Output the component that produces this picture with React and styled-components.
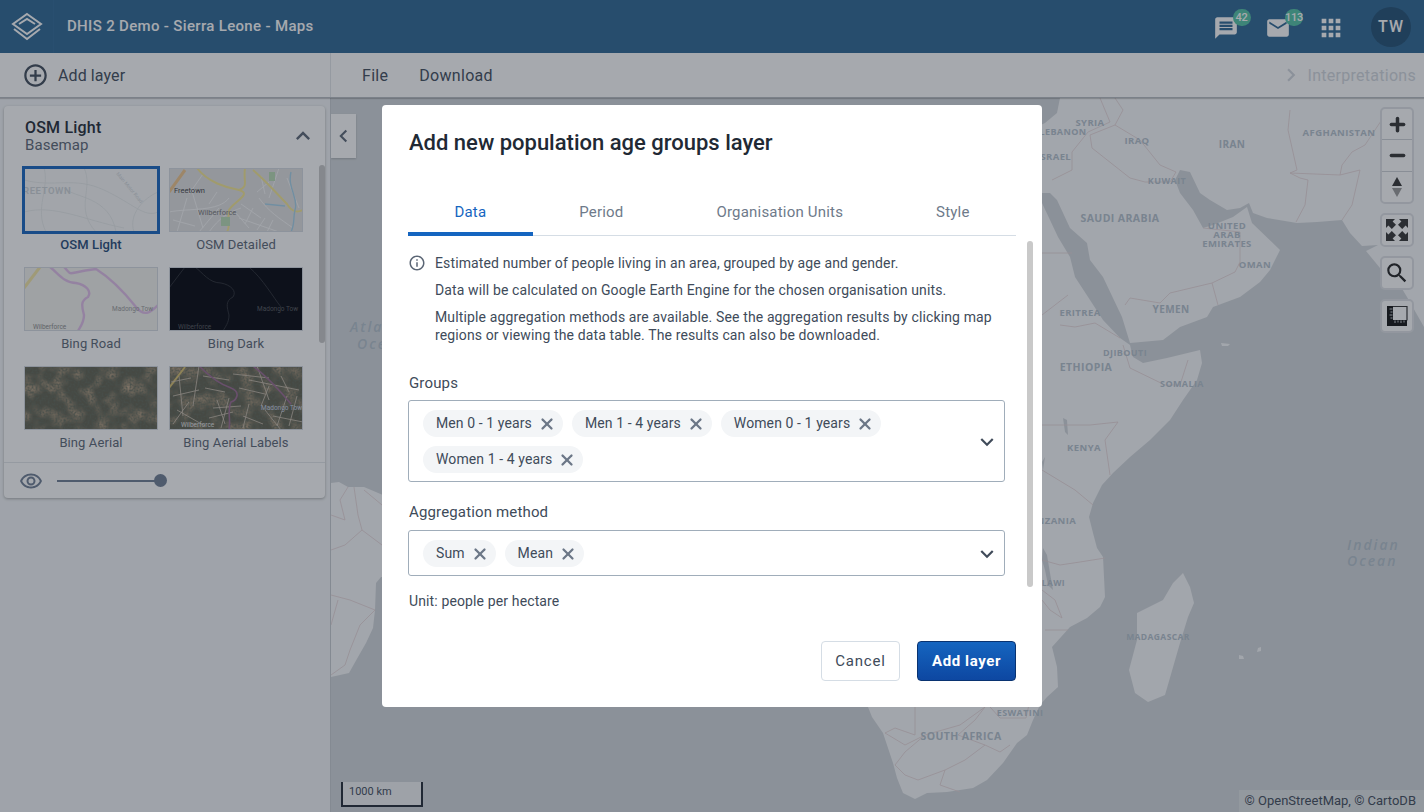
import React from 'react'
import styled, { createGlobalStyle } from 'styled-components'
import {
    MdMessage, MdEmail, MdApps, MdAddCircleOutline, MdChevronRight, MdChevronLeft,
    MdExpandLess, MdKeyboardArrowDown, MdInfoOutline, MdOutlineRemoveRedEye, MdSearch,
} from 'react-icons/md'
import { X, Plus, Minus } from 'lucide-react'

const GlobalStyle = createGlobalStyle`
    html, body {
        margin: 0;
        height: 100%;
        overflow: hidden;
        font-family: Roboto, "Liberation Sans", sans-serif;
        color: #404b5a;
    }
    * { box-sizing: border-box; }
`

const basemaps = [
    { id: 'light', name: 'OSM Light', selected: true },
    { id: 'detailed', name: 'OSM Detailed' },
    { id: 'road', name: 'Bing Road' },
    { id: 'dark', name: 'Bing Dark' },
    { id: 'aerial', name: 'Bing Aerial' },
    { id: 'labels', name: 'Bing Aerial Labels' },
]

const mapLabels = [
    ['SYRIA', 1090, 126, 9.5],
    ['LEBANON', 1063, 135, 9],
    ['ISRAEL', 1054, 160, 9.5],
    ['IRAQ', 1137, 144, 9.5],
    ['IRAN', 1232, 148, 10],
    ['AFGHANISTAN', 1339, 136, 9.5],
    ['KUWAIT', 1167, 184, 9],
    ['SAUDI ARABIA', 1120, 222, 10.5],
    ['UNITED', 1227, 229, 9.5],
    ['ARAB', 1227, 238, 9.5],
    ['EMIRATES', 1227, 247, 9.5],
    ['OMAN', 1255, 268, 9.5],
    ['YEMEN', 1171, 313, 10],
    ['ERITREA', 1080, 316, 9.5],
    ['DJIBOUTI', 1125, 356, 9],
    ['ETHIOPIA', 1086, 371, 10.5],
    ['SOMALIA', 1182, 387, 9],
    ['KENYA', 1084, 451, 9.5],
    ['TANZANIA', 1050, 524, 9.5],
    ['MALAWI', 1046, 586, 8.5],
    ['MADAGASCAR', 1158, 640, 8.5],
    ['ESWATINI', 1020, 716, 9],
    ['SOUTH AFRICA', 961, 740, 10.5],
]

const mapBorders = [
    '1100,98 1110,122 1088,132 1072,152 1072,170 1052,180',
    '1115,98 1123,110 1115,125 1090,135 1092,148 1130,178 1145,182 1170,182 1176,172',
    '1115,125 1140,140 1160,165 1176,172',
    '1290,110 1288,130 1297,170 1290,173 1300,178 1308,180 1305,205 1296,222',
    '1290,173 1340,175 1342,165 1352,152 1365,145 1385,115',
    '1340,175 1360,170 1352,205 1342,220',
    '1203,228 1240,232 1240,262 1235,272 1212,283',
    '1212,283 1218,305',
    '1212,283 1170,293 1160,303 1130,298 1125,305',
    '1040,253 1072,253',
    '1042,315 1068,295',
    '1060,325 1075,327 1095,323 1120,338',
    '1123,345 1130,368 1165,385 1180,385 1188,360',
    '1040,425 1060,425 1090,425 1118,422 1105,440 1110,475',
    '1042,470 1075,490 1093,505',
    '1105,558 1080,562 1060,565 1042,560',
    '1042,590 1055,600 1062,618 1050,610 1042,600',
    '1045,630 1068,630',
    '915,707 915,735 895,728 885,733 905,745 925,735 960,725 985,707',
    '985,707 975,720 958,735 985,745 1000,752 1010,745',
    '925,735 905,752 895,765 905,775 918,780 945,770 965,760 985,745',
    '945,770 940,785 960,792',
    '1030,700 1026,718 1000,718 990,707',
    '331,515 345,520 340,500 348,487',
    '354,487 358,515 362,530 345,545 331,550',
    '362,530 382,545',
    '364,490 382,505',
    '331,595 350,600 375,610 360,625 350,650 345,665 331,675',
    '338,600 331,625',
]

// Thumbnails are small pictures, each one drawn for its own basemap
function Thumbnail({ id }) {
    if (id === 'light') {
        return (
            <ThumbSvg viewBox="0 0 134 64">
                <rect width="134" height="64" fill="#f8f9f9" />
                <g fill="none" stroke="#e6e8e8" strokeWidth="0.8">
                    <path d="M0 12 C30 20 50 8 80 22 S120 50 134 44" />
                    <path d="M20 0 C26 20 10 40 22 64" />
                    <path d="M60 0 C70 20 50 40 72 64" />
                    <path d="M0 44 C30 36 60 52 100 60" />
                    <path d="M40 20 C50 30 86 28 92 64" />
                    <path d="M110 64 C104 46 120 30 134 24" />
                </g>
                <ThumbText x="-1" y="26" fontSize="9.5" fontWeight="600" fill="#cfd4d8" letterSpacing="0.6">REETOWN</ThumbText>
                <ThumbText x="92" y="6" fontSize="5" fill="#d3d7da" transform="rotate(50 92 6)">Main Motor Road</ThumbText>
            </ThumbSvg>
        )
    }
    if (id === 'detailed') {
        return (
            <ThumbSvg viewBox="0 0 134 64">
                <rect width="134" height="64" fill="#e2e2e2" />
                <g fill="none" stroke="#f8f8f8" strokeWidth="0.9">
                    <path d="M8 64 L18 30 M40 64 C50 50 60 44 72 40 M90 30 C100 44 110 50 124 60 M60 30 C50 44 20 40 0 44" />
                    <path d="M30 64 L50 40 M110 0 L100 30 M70 50 L110 64 M118 10 L130 40" />
                    <path d="M66 44 L80 60 M72 36 L92 50 M84 40 L76 56 M96 50 L88 62 M104 52 L98 64 M22 20 L34 60 M4 52 L26 58 M34 6 L20 26 M48 24 L40 36 M92 8 L96 26 M100 14 L88 24" />
                </g>
                <path d="M0 24 L16 2" stroke="#f1c58a" strokeWidth="3" />
                <path d="M28 0 C38 14 58 20 70 22 C84 26 64 34 60 42 C58 52 62 58 58 64" fill="none" stroke="#f6e892" strokeWidth="2" />
                <path d="M76 0 C74 14 80 18 70 22 M84 2 C100 16 108 26 118 36 C124 46 130 44 134 42" fill="none" stroke="#f6e892" strokeWidth="2" />
                <path d="M96 36 L116 38 M122 4 C118 20 130 30 126 42 C124 50 126 56 122 64" fill="none" stroke="#a7d3ea" strokeWidth="1.4" />
                <rect x="100" y="4" width="6" height="9" fill="#b9dcb4" />
                <rect x="52" y="49" width="9" height="9" fill="#b9dcb4" />
                <ThumbText x="5" y="25" fontSize="7.5" fill="#444">Freetown</ThumbText>
                <ThumbText x="29" y="47" fontSize="7.5" fill="#777">Wilberforce</ThumbText>
            </ThumbSvg>
        )
    }
    if (id === 'road') {
        return (
            <ThumbSvg viewBox="0 0 134 64">
                <rect width="134" height="64" fill="#f3f3ee" />
                <path d="M0 21 L16 0" stroke="#f3e6a4" strokeWidth="3" />
                <path d="M26 0 C34 6 40 16 52 16 C62 18 68 24 64 30 C56 34 58 40 60 48 C60 56 56 60 54 64" fill="none" stroke="#e2bfea" strokeWidth="2.4" />
                <path d="M40 0 C50 10 40 6 72 2 C88 12 104 30 112 40 C120 50 126 46 134 38" fill="none" stroke="#e2bfea" strokeWidth="2.4" />
                <ThumbText x="88" y="44" fontSize="6.5" fill="#9a9a9a">Madongo Tow</ThumbText>
                <ThumbText x="9" y="62" fontSize="6.5" fill="#8a8a8a">Wilberforce</ThumbText>
            </ThumbSvg>
        )
    }
    if (id === 'dark') {
        return (
            <ThumbSvg viewBox="0 0 134 64">
                <rect width="134" height="64" fill="#01030a" />
                <path d="M0 21 L16 0 M26 0 C34 6 40 16 52 16 C62 18 68 24 64 30 C56 34 58 40 60 48 C60 56 56 60 54 64 M80 0 C94 12 104 30 112 40" fill="none" stroke="#2a2d34" strokeWidth="0.9" />
                <ThumbText x="88" y="44" fontSize="6.5" fill="#55585e">Madongo Tow</ThumbText>
                <ThumbText x="9" y="62" fontSize="6.5" fill="#55585e">Wilberforce</ThumbText>
            </ThumbSvg>
        )
    }
    const withLabels = id === 'labels'
    return (
        <ThumbSvg viewBox="0 0 134 64">
            <defs>
                <filter id={`patch-${id}`} x="0" y="0" width="100%" height="100%">
                    <feTurbulence type="fractalNoise" baseFrequency="0.07" numOctaves="2" seed={withLabels ? 5 : 2} />
                    <feColorMatrix values="0 0 0 0 0.58  0 0 0 0 0.42  0 0 0 0 0.27  1.800 0 0 0 -0.750" />
                </filter>
                <filter id={`noise-${id}`} x="0" y="0" width="100%" height="100%">
                    <feTurbulence type="fractalNoise" baseFrequency="0.5" numOctaves="3" seed={withLabels ? 8 : 3} />
                    <feColorMatrix values="0 0 0 0 0.12  0 0 0 0 0.14  0 0 0 0 0.1  2.200 0 0 0 -0.800" />
                </filter>
            </defs>
            <rect width="134" height="64" fill="#5f5f4e" />
            <rect width="134" height="64" filter={`url(#patch-${id})`} />
            <rect width="134" height="64" filter={`url(#noise-${id})`} />
            {withLabels && (
                <g fill="none">
                    <path d="M0 22 L16 1" stroke="#d8c06e" strokeWidth="2" />
                    <g stroke="#cfc3b2" strokeWidth="0.8">
                        <path d="M4 30 L30 24 M10 10 L14 50 M30 0 L24 40 M40 52 L64 46 M48 34 L56 58 M60 32 L52 62 M44 42 L72 40 M80 14 L130 24 M88 0 L100 34 M104 50 L134 56 M96 44 L112 64 M118 30 L108 60" />
                        <path d="M64 8 L100 12 M70 22 L96 28 M8 44 L36 60 M2 16 L22 12 M34 10 L60 14 M36 22 L56 26 M100 20 L92 40 M112 10 L120 26 M128 30 L120 60 M74 50 L94 58 M80 38 L74 62 M4 58 L20 36" />
                    </g>
                    <path d="M30 0 C38 8 50 18 62 22 C72 26 68 34 62 36 C58 44 62 54 60 64 M84 0 C100 12 112 26 122 38" stroke="#9a6a92" strokeWidth="1.6" />
                    <ThumbText x="92" y="44" fontSize="6.5" fill="#c9d6e6" stroke="none">Madongo Tow</ThumbText>
                    <ThumbText x="12" y="61" fontSize="6.5" fill="#e4e4e4" stroke="none">Wilberforce</ThumbText>
                </g>
            )}
        </ThumbSvg>
    )
}

function LogoIcon() {
    return (
        <svg width="32" height="30" viewBox="0 0 32 30" fill="none" stroke="#fff" strokeWidth="2">
            <path d="M16 2 L30 12 L16 22 L2 12 Z" />
            <path d="M8 12 L16 7 L24 12" />
            <path d="M3 17 L16 27 L29 17" />
        </svg>
    )
}

function FullscreenIcon() {
    return (
        <svg width="24" height="24" viewBox="0 0 24 24" fill="#333">
            <path d="M1 1h9L7.6 3.4 11 6.8 6.8 11 3.4 7.6 1 10z" />
            <path d="M23 1v9l-2.4-2.4L17.2 11 13 6.8l3.4-3.4L14 1z" />
            <path d="M1 23v-9l2.4 2.4L6.8 13l4.2 4.2-3.4 3.4L10 23z" />
            <path d="M23 23h-9l2.4-2.4-3.4-3.4 4.2-4.2 3.4 3.4L23 14z" />
        </svg>
    )
}

function MeasureIcon() {
    return (
        <svg width="22" height="22" viewBox="0 0 22 22">
            <path d="M7 1.500h14v14" fill="none" stroke="#333" strokeWidth="1.2" />
            <path d="M1 1h6v14h14v6H1z" fill="#111" />
            <path d="M3.500 4h3M4.500 7h2M3.500 10h3M4.500 13h2M9 18v-2.500M12 17.500v-2M15 18v-2.500M18 17.500v-2" stroke="#c9cdd2" strokeWidth="1" />
        </svg>
    )
}

function CompassIcon() {
    return (
        <svg width="12" height="20" viewBox="0 0 12 20">
            <path d="M6 0 L11 9 H1 Z" fill="#333" />
            <path d="M6 20 L11 11 H1 Z" fill="#999" />
        </svg>
    )
}

function MapBackground() {
    return (
        <MapSvg viewBox="331 98 1093 714" preserveAspectRatio="none">
            <path
                fill="#f9fafc"
                d="M760 98 L1424 98 L1424 327 L1407 297 L1395 277 L1380 268 L1366 251 L1378 245 L1362 246 L1350 233 L1342 220 L1317 222 L1297 223 L1267 218 L1253 213 L1249 203 L1240 208 L1227 210 L1210 200 L1200 193 L1190 172 L1180 170 L1175 180 L1180 193 L1193 210 L1203 228 L1213 225 L1233 217 L1247 207 L1252 223 L1280 250 L1270 270 L1260 282 L1240 297 L1213 307 L1207 317 L1180 327 L1163 340 L1130 343 L1122 317 L1103 277 L1090 260 L1087 243 L1070 228 L1057 200 L1050 193 L1035 193 L1035 203 L1042 203 L1058 237 L1070 257 L1075 277 L1090 300 L1103 320 L1120 338 L1130 345 L1133 357 L1143 363 L1167 358 L1200 350 L1202 363 L1197 380 L1183 400 L1170 420 L1150 440 L1130 457 L1113 473 L1102 485 L1093 503 L1089 517 L1093 533 L1097 548 L1103 557 L1105 597 L1100 607 L1087 618 L1070 627 L1052 647 L1057 667 L1058 687 L1047 697 L1040 705 L1033 720 L1027 735 L1017 743 L1003 763 L987 780 L973 788 L947 792 L927 793 L915 799 L903 793 L897 778 L893 763 L883 733 L872 717 L868 707 L860 600 Z"
            />
            <path fill="#d3d8dc" d="M750 98 L1060 98 L1057 113 L1045 123 L1030 130 L750 130 Z" />
            <path fill="#d3d8dc" d="M1042 462 L1045 457 L1043 470 Z M1043 548 L1047 555 L1050 573 L1053 590 L1048 585 L1045 570 L1042 560 Z M1063 418 L1067 420 L1068 435 L1065 432 Z" />
            <path
                fill="#f9fafc"
                d="M1183 573 L1190 587 L1194 603 L1188 617 L1180 643 L1165 695 L1148 702 L1135 693 L1129 670 L1137 640 L1137 613 L1163 600 L1173 583 Z M1239 655 L1243 656 L1244 659 L1239 659 Z M1258 648 L1261 647 L1261 651 L1257 652 Z M1221 343 L1230 344 L1228 346 L1222 346 Z"
            />
            <path
                fill="#f9fafc"
                d="M331 483 L339 482 L348 487 L364 487 L390 498 L390 577 L381 577 L376 583 L375 610 L373 628 L366 643 L358 657 L349 673 L331 677 Z"
            />
            <g fill="none" stroke="#e6d4d6" strokeWidth="0.8">
                {mapBorders.map((points) => <polyline key={points} points={points} />)}
            </g>
            {mapLabels.map(([text, x, y, size]) => (
                <MapLabel key={text} x={x} y={y} fontSize={size}>{text}</MapLabel>
            ))}
            <OceanLabel x="350" y="332">Atlantic</OceanLabel>
            <OceanLabel x="357" y="349">Ocean</OceanLabel>
            <OceanLabel x="1347" y="550">Indian</OceanLabel>
            <OceanLabel x="1347" y="566">Ocean</OceanLabel>
        </MapSvg>
    )
}

function Chip({ children }) {
    return (
        <ChipBox>
            <ChipText>{children}</ChipText>
            <X size={18} strokeWidth={3} color="#6c7787" />
        </ChipBox>
    )
}

function MultiSelect({ options }) {
    return (
        <SelectBox>
            <ChipWrap>
                {options.map((option) => <Chip key={option}>{option}</Chip>)}
            </ChipWrap>
            <MdKeyboardArrowDown size={26} color="#404b5a" />
        </SelectBox>
    )
}

function App() {
    return (
        <Page>
            <GlobalStyle />
            <HeaderBar>
                <LogoBox><LogoIcon /></LogoBox>
                <AppTitle>DHIS 2 Demo - Sierra Leone - Maps</AppTitle>
                <HeaderActions>
                    <HeaderIcon>
                        <MdMessage size={26} />
                        <Badge>42</Badge>
                    </HeaderIcon>
                    <HeaderIcon>
                        <MdEmail size={26} />
                        <Badge>113</Badge>
                    </HeaderIcon>
                    <HeaderIcon>
                        <MdApps size={28} />
                    </HeaderIcon>
                    <Avatar>TW</Avatar>
                </HeaderActions>
            </HeaderBar>

            <Toolbar>
                <AddLayer>
                    <MdAddCircleOutline size={27} />
                    <span>Add layer</span>
                </AddLayer>
                <MenuItems>
                    <MenuItem>File</MenuItem>
                    <MenuItem>Download</MenuItem>
                </MenuItems>
                <Interpretations>
                    <MdChevronRight size={26} />
                    <span>Interpretations</span>
                </Interpretations>
            </Toolbar>

            <Main>
                <Sidebar>
                    <Panel>
                        <PanelHeader>
                            <div>
                                <PanelTitle>OSM Light</PanelTitle>
                                <PanelSubtitle>Basemap</PanelSubtitle>
                            </div>
                            <MdExpandLess size={28} />
                        </PanelHeader>
                        <BasemapGrid>
                            {basemaps.map((basemap) => (
                                <BasemapCard key={basemap.id}>
                                    <ThumbFrame $selected={basemap.selected}>
                                        <Thumbnail id={basemap.id} />
                                    </ThumbFrame>
                                    <BasemapName $selected={basemap.selected}>{basemap.name}</BasemapName>
                                </BasemapCard>
                            ))}
                        </BasemapGrid>
                        <ScrollThumb $top={59} $right={0} $height={178} />
                        <PanelFooter>
                            <MdOutlineRemoveRedEye size={24} />
                            <SliderTrack><SliderKnob /></SliderTrack>
                        </PanelFooter>
                    </Panel>
                </Sidebar>

                <MapArea>
                    <MapBackground />
                    <CollapseTab><MdChevronLeft size={26} /></CollapseTab>
                    <MapControls>
                        <ControlGroup>
                            <ControlButton><Plus size={21} strokeWidth={4} color="#333" /></ControlButton>
                            <ControlButton $divided><Minus size={21} strokeWidth={4} color="#333" /></ControlButton>
                            <ControlButton $divided><CompassIcon /></ControlButton>
                        </ControlGroup>
                        <ControlGroup><ControlButton><FullscreenIcon /></ControlButton></ControlGroup>
                        <ControlGroup><ControlButton><MdSearch size={26} color="#222" /></ControlButton></ControlGroup>
                        <ControlGroup><ControlButton><MeasureIcon /></ControlButton></ControlGroup>
                    </MapControls>
                    <ScaleBar>1000 km</ScaleBar>
                    <Attribution>© OpenStreetMap, © CartoDB</Attribution>
                </MapArea>
            </Main>

            <Overlay>
                <Modal>
                    <ModalTitle>Add new population age groups layer</ModalTitle>
                    <Tabs>
                        <Tab $active>Data</Tab>
                        <Tab>Period</Tab>
                        <Tab>Organisation Units</Tab>
                        <Tab>Style</Tab>
                    </Tabs>
                    <ModalBody>
                        <Notice>
                            <MdInfoOutline size={18} color="#5b6675" />
                            <NoticeText>
                                <p>Estimated number of people living in an area, grouped by age and gender.</p>
                                <p>Data will be calculated on Google Earth Engine for the chosen organisation units.</p>
                                <p>Multiple aggregation methods are available. See the aggregation results by clicking map regions or viewing the data table. The results can also be downloaded.</p>
                            </NoticeText>
                        </Notice>
                        <FieldLabel $top={30} $bottom={8}>Groups</FieldLabel>
                        <MultiSelect options={['Men 0 - 1 years', 'Men 1 - 4 years', 'Women 0 - 1 years', 'Women 1 - 4 years']} />
                        <FieldLabel $top={21} $bottom={9}>Aggregation method</FieldLabel>
                        <MultiSelect options={['Sum', 'Mean']} />
                        <UnitNote>Unit: people per hectare</UnitNote>
                    </ModalBody>
                    <ScrollThumb $top={136} $right={9} $height={346} />
                    <ModalActions>
                        <SecondaryButton>Cancel</SecondaryButton>
                        <PrimaryButton>Add layer</PrimaryButton>
                    </ModalActions>
                </Modal>
            </Overlay>
        </Page>
    )
}

export default App

const Page = styled.div`
    height: 100vh;
    display: flex;
    flex-direction: column;
    background: #f4f6f8;
`

const HeaderBar = styled.header`
    height: 53px;
    flex: none;
    display: flex;
    align-items: center;
    background: #2c6693;
    color: #fff;
`

const LogoBox = styled.div`
    width: 54px;
    height: 53px;
    display: flex;
    align-items: center;
    justify-content: center;
    border-right: 1px solid #2f6a98;
`

const AppTitle = styled.div`
    margin-left: 13px;
    padding-bottom: 1px;
    font-size: 15px;
    font-weight: 500;
    letter-spacing: 0.33px;
`

const HeaderActions = styled.div`
    margin-left: auto;
    display: flex;
    align-items: center;
    padding-right: 13px;
`

const HeaderIcon = styled.div`
    position: relative;
    width: 52.500px;
    height: 53px;
    display: flex;
    align-items: center;
    justify-content: center;
    padding-top: 2px;
`

const Badge = styled.span`
    position: absolute;
    left: 33px;
    top: 9px;
    min-width: 18px;
    height: 17px;
    border-radius: 9px;
    background: #52c4a5;
    color: #fff;
    font-size: 11px;
    font-weight: 500;
    letter-spacing: -0.3px;
    line-height: 17px;
    text-align: center;
`

const Avatar = styled.div`
    width: 40px;
    height: 40px;
    margin-left: 14px;
    border-radius: 50%;
    background: #214f73;
    display: flex;
    align-items: center;
    justify-content: center;
    font-size: 16px;
    font-weight: 500;
    letter-spacing: 1px;
`

const Toolbar = styled.div`
    height: 45px;
    flex: none;
    display: flex;
    align-items: stretch;
    background: #fff;
    border-bottom: 1px solid #b8bcc2;
    box-shadow: 0 1px 1px rgba(0, 0, 0, 0.2);
    position: relative;
    z-index: 2;
`

const AddLayer = styled.div`
    width: 331px;
    flex: none;
    display: flex;
    align-items: center;
    gap: 9px;
    padding-left: 22px;
    border-right: 1px solid #e3e6ea;
    font-size: 16px;
    letter-spacing: 0.1px;
`

const MenuItems = styled.div`
    display: flex;
    align-items: center;
    gap: 31px;
    padding-left: 31px;
`

const MenuItem = styled.div`
    font-size: 16px;
    letter-spacing: 0.3px;
    color: #404b5a;
`

const Interpretations = styled.div`
    margin-left: auto;
    padding-right: 8px;
    display: flex;
    align-items: center;
    gap: 4px;
    font-size: 16px;
    letter-spacing: 0.27px;
    color: #d3d8de;
`

const Main = styled.div`
    flex: 1;
    min-height: 0;
    display: flex;
`

const Sidebar = styled.aside`
    width: 331px;
    flex: none;
    padding: 8px 0 0 4px;
    border-right: 1px solid #c6cbd1;
    background: #f4f6f8;
`

const Panel = styled.section`
    position: relative;
    width: 321px;
    height: 392px;
    background: #fff;
    border-radius: 4px;
    box-shadow: 0 1px 3px rgba(0, 0, 0, 0.3);
`

const PanelHeader = styled.div`
    height: 60px;
    padding: 0 8px 0 21px;
    display: flex;
    align-items: center;
    justify-content: space-between;
    color: #5b6675;
`

const PanelTitle = styled.div`
    font-size: 16px;
    font-weight: 500;
    line-height: 19px;
    letter-spacing: 0.2px;
    color: #212934;
`

const PanelSubtitle = styled.div`
    font-size: 15px;
    line-height: 17px;
    letter-spacing: 0.1px;
    color: #5b6675;
`

const BasemapGrid = styled.div`
    display: grid;
    grid-template-columns: 134px 134px;
    align-content: start;
    column-gap: 11px;
    row-gap: 14px;
    padding: 2px 0 0 20px;
    height: 296px;
`

const BasemapCard = styled.div`
    display: flex;
    flex-direction: column;
    align-items: center;
`

const ThumbFrame = styled.div`
    width: 134px;
    height: 64px;
    outline: ${(props) => (props.$selected ? '3px solid #1565c0' : '1px solid #d5dbe1')};
    outline-offset: -1px;
`

const ThumbSvg = styled.svg`
    display: block;
    width: 100%;
    height: 100%;
`

const ThumbText = styled.text`
    font-family: Roboto, sans-serif;
`

const BasemapName = styled.div`
    margin-top: 5px;
    font-size: 13px;
    line-height: 16px;
    letter-spacing: 0.1px;
    font-weight: ${(props) => (props.$selected ? 500 : 400)};
    color: ${(props) => (props.$selected ? '#1f4a78' : '#5b6675')};
`

const ScrollThumb = styled.div`
    position: absolute;
    top: ${(props) => props.$top}px;
    right: ${(props) => props.$right}px;
    width: 6px;
    height: ${(props) => props.$height}px;
    border-radius: 3px;
    background: #c9c9c9;
`

const PanelFooter = styled.div`
    height: 36px;
    display: flex;
    align-items: center;
    gap: 14px;
    padding-left: 15px;
    border-top: 1px solid #e3e6ea;
    color: #6e7d93;
`

const SliderTrack = styled.div`
    position: relative;
    width: 103px;
    height: 2px;
    background: #6e7d93;
`

const SliderKnob = styled.div`
    position: absolute;
    right: -7px;
    top: -6px;
    width: 13px;
    height: 13px;
    border-radius: 50%;
    background: #6e7d93;
`

const MapArea = styled.main`
    position: relative;
    flex: 1;
    min-width: 0;
    overflow: hidden;
    background: #d3d8dc;
`

const MapSvg = styled.svg`
    display: block;
    width: 100%;
    height: 100%;
`

const MapLabel = styled.text`
    font-family: "Open Sans", sans-serif;
    font-weight: 700;
    letter-spacing: 0.4px;
    text-anchor: middle;
    fill: #b4c1cc;
`

const OceanLabel = styled.text`
    font-family: "Open Sans", sans-serif;
    font-size: 14px;
    font-style: italic;
    font-weight: 600;
    letter-spacing: 2px;
    fill: #b4c1cc;
`

const CollapseTab = styled.div`
    position: absolute;
    left: 0;
    top: 16px;
    width: 25px;
    height: 44px;
    background: #fff;
    display: flex;
    align-items: center;
    justify-content: center;
    color: #5b6675;
    box-shadow: 0 1px 2px rgba(0, 0, 0, 0.2);
`

const MapControls = styled.div`
    position: absolute;
    top: 9px;
    right: 10px;
    display: flex;
    flex-direction: column;
    gap: 9px;
`

const ControlGroup = styled.div`
    width: 34px;
    display: flex;
    flex-direction: column;
    background: #fff;
    border: 2px solid #dfe2e6;
    border-radius: 5px;
`

const ControlButton = styled.div`
    height: ${(props) => (props.$divided ? 31.5 : 30)}px;
    display: flex;
    align-items: center;
    justify-content: center;
    color: #222;
    border-top: ${(props) => (props.$divided ? '1px solid #cfd3d8' : 'none')};
`

const ScaleBar = styled.div`
    position: absolute;
    left: 10px;
    bottom: 5px;
    width: 82px;
    height: 25px;
    padding: 2px 0 0 6px;
    border: 2px solid #212934;
    border-top: none;
    background: rgba(255, 255, 255, 0.7);
    font-size: 11px;
    line-height: 16px;
    color: #404b5a;
`

const Attribution = styled.div`
    position: absolute;
    right: 0;
    bottom: 0;
    height: 22px;
    padding: 0 8px 0 6px;
    background: rgba(255, 255, 255, 0.3);
    font-size: 13px;
    line-height: 22px;
    color: #404b5a;
`

const Overlay = styled.div`
    position: fixed;
    inset: 0;
    z-index: 10;
    display: flex;
    align-items: center;
    justify-content: center;
    background: rgba(33, 41, 52, 0.4);
`

const Modal = styled.div`
    position: relative;
    width: 660px;
    height: 602px;
    padding: 24px 26px 26px;
    display: flex;
    flex-direction: column;
    background: #fff;
    border-radius: 4px;
`

const ModalTitle = styled.h2`
    margin: 0 0 0 1px;
    font-size: 22px;
    font-weight: 500;
    line-height: 28px;
    color: #212934;
`

const Tabs = styled.div`
    margin-top: 33px;
    height: 46px;
    display: flex;
    border-bottom: 1px solid #d5dde5;
`

const Tab = styled.div`
    flex: 1 1 auto;
    display: flex;
    align-items: center;
    justify-content: center;
    padding-top: 2px;
    margin-bottom: ${(props) => (props.$active ? '-1px' : 0)};
    font-size: 15px;
    letter-spacing: 0.2px;
    color: ${(props) => (props.$active ? '#1565c0' : '#6e7a8a')};
    border-bottom: ${(props) => (props.$active ? '4px solid #1565c0' : '4px solid transparent')};
`

const ModalBody = styled.div`
    padding: 18px 11px 0 0;
    font-size: 14px;
    letter-spacing: 0.13px;
    color: #404b5a;
`

const Notice = styled.div`
    display: flex;
    gap: 9px;
    & > svg {
        flex: none;
    }
`

const NoticeText = styled.div`
    & > p {
        margin: 0 0 9px;
        line-height: 18px;
    }
    & > p:last-child {
        margin-bottom: 0;
    }
`

const FieldLabel = styled.div`
    margin-top: ${(props) => props.$top}px;
    margin-bottom: ${(props) => props.$bottom}px;
    line-height: 18px;
    padding-left: 1px;
    font-size: 15px;
    letter-spacing: 0.15px;
`

const SelectBox = styled.div`
    display: flex;
    align-items: center;
    padding: 9px 4px 8px 14px;
    border: 1px solid #a0adba;
    border-radius: 3px;
    background: #fff;
`

const ChipWrap = styled.div`
    flex: 1;
    display: flex;
    flex-wrap: wrap;
    gap: 9px;
`

const ChipBox = styled.div`
    height: 27px;
    display: flex;
    align-items: center;
    gap: 6px;
    padding: 0 7px 0 13px;
    border-radius: 14px;
    background: #f3f5f7;
    font-size: 14px;
    letter-spacing: 0.1px;
    color: #404b5a;
`

const ChipText = styled.span`
    padding-bottom: 1px;
`

const UnitNote = styled.div`
    margin-top: 16px;
    line-height: 18px;
    padding-left: 1px;
`

const ModalActions = styled.div`
    margin-top: auto;
    display: flex;
    justify-content: flex-end;
    gap: 17px;
`

const SecondaryButton = styled.button`
    height: 40px;
    width: 79px;
    background: #fff;
    border: 1px solid #d5dde5;
    border-radius: 4px;
    font-family: inherit;
    font-size: 15px;
    letter-spacing: 0.8px;
    color: #404b5a;
`

const PrimaryButton = styled.button`
    height: 40px;
    width: 99px;
    background: linear-gradient(180deg, #1565c0 0%, #0d47a1 100%);
    border: 1px solid #093371;
    border-radius: 4px;
    font-family: inherit;
    font-size: 15px;
    font-weight: 700;
    letter-spacing: 0.6px;
    color: #fff;
`
